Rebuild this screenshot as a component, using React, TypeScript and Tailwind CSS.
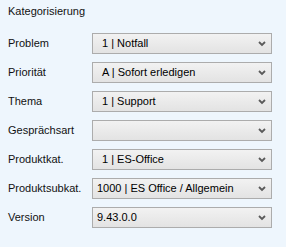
import React from "react";

type Row = { label: string; value: string; pad: number };

const rows: Row[] = [
  { label: "Problem", value: "1 | Notfall", pad: 9 },
  { label: "Priorität", value: "A | Sofort erledigen", pad: 9 },
  { label: "Thema", value: "1 | Support", pad: 9 },
  { label: "Gesprächsart", value: "", pad: 9 },
  { label: "Produktkat.", value: "1 | ES-Office", pad: 9 },
  { label: "Produktsubkat.", value: "1000 | ES Office / Allgemein", pad: 4 },
  { label: "Version", value: "9.43.0.0", pad: 4 },
];

function Chevron() {
  return (
    <svg width="8" height="6" viewBox="0 0 8 6" className="mr-[5px] shrink-0">
      <path d="M1 1 L4 4 L7 1" fill="none" stroke="#5a5a5a" strokeWidth="1.8" />
    </svg>
  );
}

export default function App() {
  return (
    <div className="w-[286px] h-[247px] bg-[#eef6fd] font-['Liberation_Sans',Arial,sans-serif] text-[11px] text-[#111]">
      <div className="pl-[8px] pt-[5px] leading-[13px]">Kategorisierung</div>
      <div className="mt-[15px] flex flex-col gap-[8px] pl-[8px]">
        {rows.map((r) => (
          <div key={r.label} className="flex items-center h-[21px]">
            <div className="w-[84px] leading-[13px]">{r.label}</div>
            <div className="w-[180px] h-[21px] border border-[#acacac] bg-gradient-to-b from-[#f2f2f2] to-[#e3e3e3] flex items-center">
              <div
                className="flex-1 leading-[13px] text-black whitespace-nowrap"
                style={{ paddingLeft: r.pad }}
              >
                {r.value}
              </div>
              <Chevron />
            </div>
          </div>
        ))}
      </div>
    </div>
  );
}
